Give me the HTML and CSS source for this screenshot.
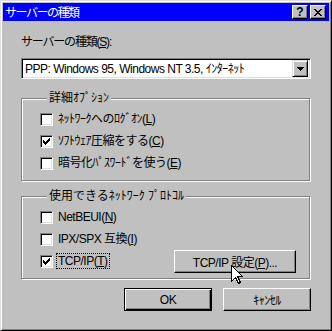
FILE: index.html
```html
<!DOCTYPE html>
<html lang="ja">
<head>
    <meta charset="UTF-8">
    <title>サーバーの種類</title>
    <link rel="stylesheet" href="styles.css">
</head>
<body>
    <div class="window">
        <div class="titlebar">
            <span class="title">サーバーの種類</span>
            <span class="tb-btn help">?</span>
            <span class="tb-btn close">
                <svg width="8" height="7" viewBox="0 0 8 7" shape-rendering="crispEdges">
                    <path d="M0 0h2v1h-2zM6 0h2v1h-2zM1 1h2v1h-2zM5 1h2v1h-2zM2 2h4v1h-4zM3 3h2v1h-2zM2 4h4v1h-4zM1 5h2v1h-2zM5 5h2v1h-2zM0 6h2v1h-2zM6 6h2v1h-2z" fill="#000"/>
                </svg>
            </span>
        </div>

        <div class="content">
            <div class="label">サーバーの種類(<u>S</u>):</div>
            <div class="combo">
                <span class="combo-text">PPP: Windows 95, Windows NT 3.5, ｲﾝﾀｰﾈｯﾄ</span>
                <span class="combo-btn">
                    <svg width="7" height="4" viewBox="0 0 7 4" shape-rendering="crispEdges">
                        <path d="M0 0h7v1h-7zM1 1h5v1h-5zM2 2h3v1h-3zM3 3h1v1h-1z" fill="#000"/>
                    </svg>
                </span>
            </div>

            <fieldset class="group group-options">
                <legend>詳細ｵﾌﾟｼｮﾝ</legend>
                <div class="check-row">
                    <span class="checkbox"></span>
                    <span class="check-label">ﾈｯﾄﾜｰｸへのﾛｸﾞｵﾝ(<u>L</u>)</span>
                </div>
                <div class="check-row">
                    <span class="checkbox checked">
                        <svg width="7" height="7" viewBox="0 0 7 7" shape-rendering="crispEdges">
                            <path d="M6 0h1v1h-1zM5 1h2v1h-2zM0 2h1v1h-1zM4 2h3v1h-3zM0 3h2v1h-2zM3 3h3v1h-3zM0 4h5v1h-5zM1 5h3v1h-3zM2 6h1v1h-1z" fill="#000"/>
                        </svg>
                    </span>
                    <span class="check-label">ｿﾌﾄｳｪｱ圧縮をする(<u>C</u>)</span>
                </div>
                <div class="check-row">
                    <span class="checkbox"></span>
                    <span class="check-label">暗号化ﾊﾟｽﾜｰﾄﾞを使う(<u>E</u>)</span>
                </div>
            </fieldset>

            <fieldset class="group group-protocols">
                <legend>使用できるﾈｯﾄﾜｰｸ ﾌﾟﾛﾄｺﾙ</legend>
                <div class="check-row">
                    <span class="checkbox"></span>
                    <span class="check-label">NetBEUI(<u>N</u>)</span>
                </div>
                <div class="check-row">
                    <span class="checkbox"></span>
                    <span class="check-label">IPX/SPX 互換(<u>I</u>)</span>
                </div>
                <div class="check-row">
                    <span class="checkbox checked">
                        <svg width="7" height="7" viewBox="0 0 7 7" shape-rendering="crispEdges">
                            <path d="M6 0h1v1h-1zM5 1h2v1h-2zM0 2h1v1h-1zM4 2h3v1h-3zM0 3h2v1h-2zM3 3h3v1h-3zM0 4h5v1h-5zM1 5h3v1h-3zM2 6h1v1h-1z" fill="#000"/>
                        </svg>
                    </span>
                    <span class="check-label focus">TCP/IP(<u>T</u>)</span>
                    <button class="btn btn-settings">TCP/IP 設定(<u>P</u>)...</button>
                </div>
            </fieldset>

            <div class="footer">
                <button class="btn btn-default">OK</button>
                <button class="btn">ｷｬﾝｾﾙ</button>
            </div>
        </div>

        <svg class="cursor" width="12" height="20" viewBox="0 0 12 20" shape-rendering="crispEdges">
            <path d="M0.5 0.5V16.5L4.5 12.5L7.5 18.5L9.5 17.5L6.5 11.5H11.5Z" fill="#fff" stroke="#000" stroke-width="1"/>
        </svg>
    </div>
</body>
</html>
```

FILE: styles.css
```css
* {
    margin: 0;
    padding: 0;
    box-sizing: border-box;
}

body {
    font-family: "Liberation Sans", "Noto Sans CJK JP", sans-serif;
    font-size: 12px;
    line-height: 14px;
    letter-spacing: -0.5px;
    color: #000;
    background-color: #c0c0c0;
}

.window {
    position: relative;
    width: 332px;
    height: 331px;
    padding: 2px;
    background-color: #c0c0c0;
    border: 1px solid;
    border-color: #dfdfdf #000 #000 #dfdfdf;
    box-shadow: inset 1px 1px #fff, inset -1px -1px #808080;
    display: flex;
    flex-direction: column;
}

.titlebar {
    height: 18px;
    background-color: #0000ff;
    color: #fff;
    display: flex;
    align-items: center;
    gap: 2px;
    padding: 0 3px 0 2px;
}

.title {
    flex: 1;
    font-family: "Noto Sans CJK JP", sans-serif;
    letter-spacing: -1.5px;
}

.tb-btn {
    width: 16px;
    height: 14px;
    background-color: #c0c0c0;
    color: #000;
    border: 1px solid;
    border-color: #fff #000 #000 #fff;
    box-shadow: inset -1px -1px #808080;
    display: flex;
    align-items: center;
    justify-content: center;
}

.help {
    font-weight: bold;
    font-size: 12px;
    line-height: 12px;
    letter-spacing: 0;
}

.close svg {
    display: block;
}

.content {
    flex: 1;
    padding: 14px 18px 0;
    display: flex;
    flex-direction: column;
}

.label {
    letter-spacing: -1.2px;
}

.combo {
    margin-top: 9px;
    height: 21px;
    background-color: #fff;
    border: 1px solid;
    border-color: #808080 #fff #fff #808080;
    box-shadow: inset 1px 1px #000, inset -1px -1px #dfdfdf;
    display: flex;
    align-items: center;
    padding: 2px 2px 2px 3px;
}

.combo-text {
    flex: 1;
}

.combo-btn {
    width: 16px;
    height: 17px;
    background-color: #c0c0c0;
    border: 1px solid;
    border-color: #dfdfdf #000 #000 #dfdfdf;
    box-shadow: inset 1px 1px #fff, inset -1px -1px #808080;
    display: flex;
    align-items: center;
    justify-content: center;
}

.group {
    border: 1px solid #808080;
    box-shadow: inset 1px 1px #fff, 1px 1px #fff;
    padding: 3px 0 6px 18px;
    margin-right: 1px;
}

.group legend {
    margin-left: 7px;
    padding: 0 2px;
    letter-spacing: 0;
    background-color: #c0c0c0;
}

.group-options {
    margin-top: 12px;
}

.group-protocols {
    margin-top: 8px;
    padding-right: 13px;
}

.check-row {
    height: 22px;
    display: flex;
    align-items: center;
    gap: 5px;
}

.checkbox {
    width: 13px;
    height: 13px;
    background-color: #fff;
    border: 1px solid;
    border-color: #808080 #fff #fff #808080;
    box-shadow: inset 1px 1px #000, inset -1px -1px #dfdfdf;
    padding: 2px;
}

.checkbox svg {
    display: block;
}

.focus {
    outline: 1px dotted #000;
    outline-offset: 0;
    padding: 0 1px;
    margin-left: -1px;
}

.btn {
    font-family: inherit;
    font-size: 12px;
    letter-spacing: -0.5px;
    height: 23px;
    width: 88px;
    background-color: #c0c0c0;
    border: 1px solid;
    border-color: #fff #000 #000 #fff;
    box-shadow: inset -1px -1px #808080;
}

.btn-settings {
    width: 122px;
    margin-left: auto;
}

.btn-default {
    border-color: #000;
    box-shadow: inset 1px 1px #fff, inset -1px -1px #000, inset -2px -2px #808080;
}

.footer {
    margin-top: 9px;
    display: flex;
    justify-content: flex-end;
    gap: 11px;
}

.cursor {
    position: absolute;
    left: 230px;
    top: 264px;
}
```
